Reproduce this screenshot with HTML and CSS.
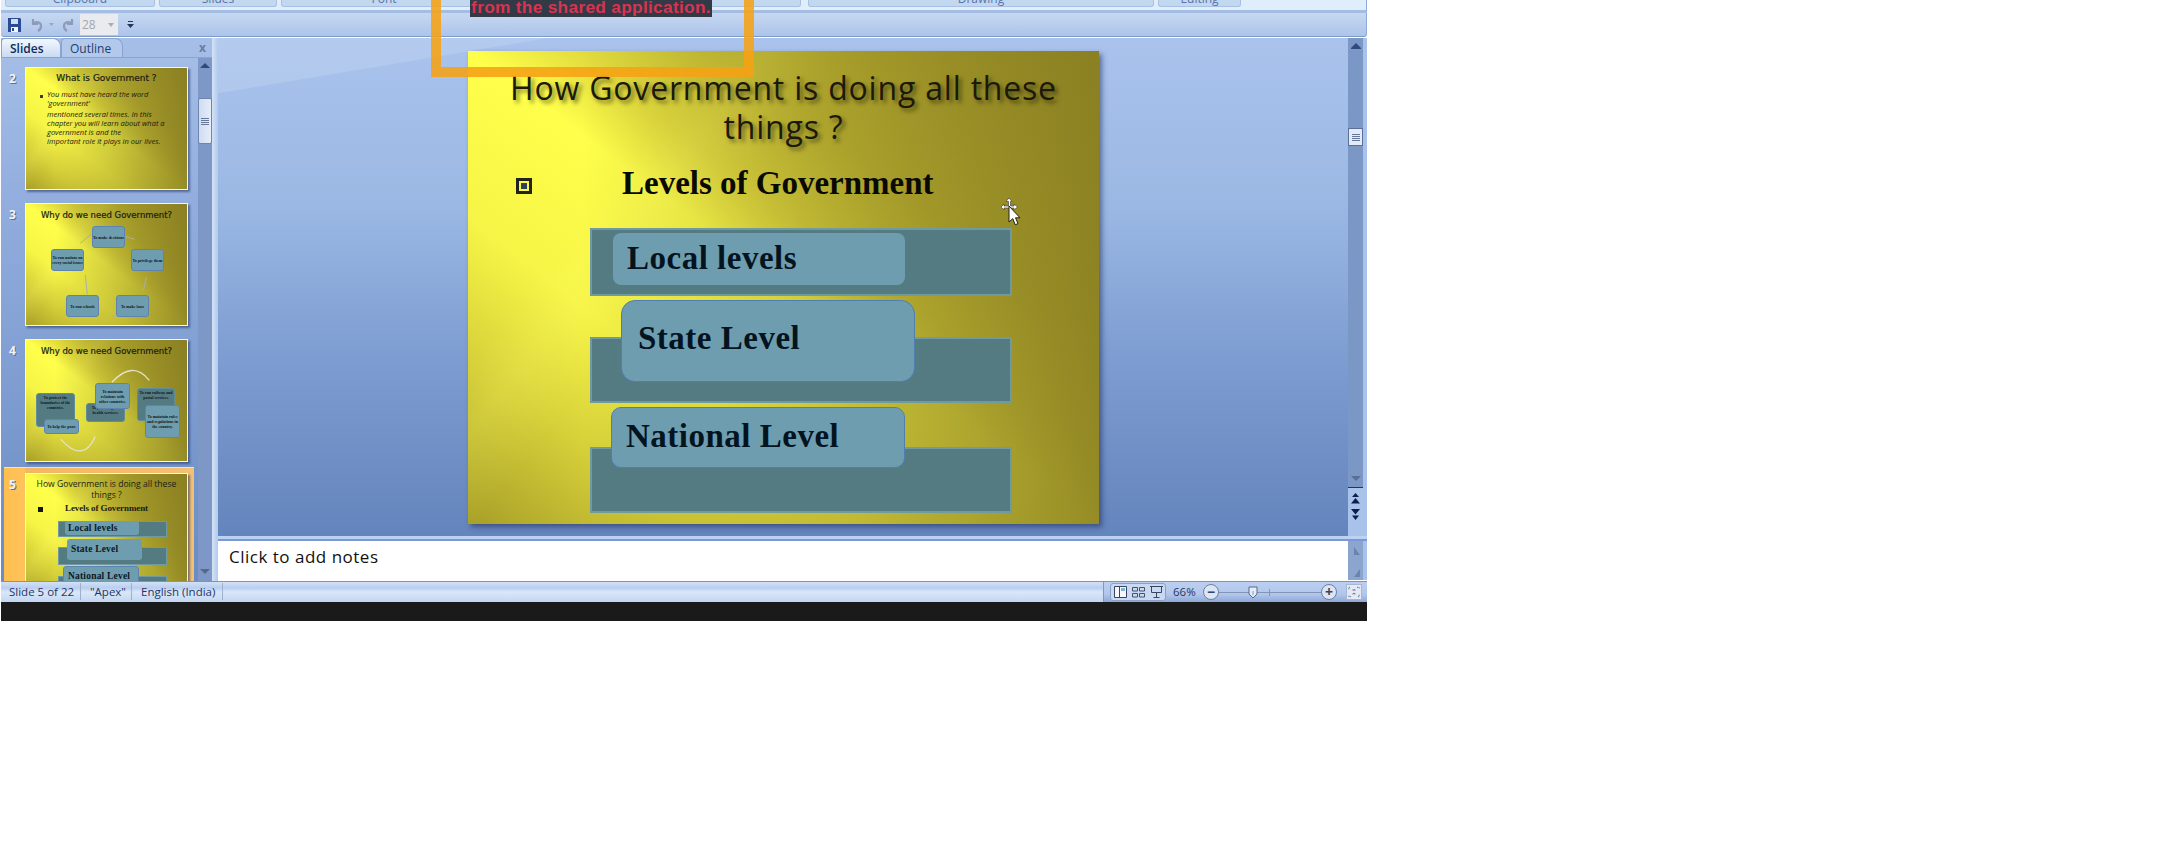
FILE: index.html
```html
<!DOCTYPE html>
<html lang="en">
<head>
    <meta charset="UTF-8" />
    <title>Presentation - Slide 5</title>
    <link rel="stylesheet" href="styles.css">
</head>
<body>
    <div class="app">
        <div class="ribbon">
            <div class="group group-clipboard">Clipboard</div>
            <div class="group group-slides">Slides</div>
            <div class="group group-font">Font</div>
            <div class="group group-para"></div>
            <div class="group group-drawing">Drawing</div>
            <div class="group group-editing">Editing</div>
        </div>
        <div class="qat">
            <svg class="qat-icon" width="13" height="14" viewBox="0 0 13 14"><path d="M0 0h12l1 1v13H0z" fill="#2a4a92"/><path d="M3 1h7v5H3z" fill="#cfdcf2"/><path d="M3 9h7v5H3z" fill="#f2f5fb"/><path d="M4 10h2v3H4z" fill="#2a4a92"/></svg>
            <svg class="qat-icon undo" width="13" height="14" viewBox="0 0 13 14"><path d="M3 1v5h5M3.500 5.500C6 3 11 4 11 8c0 2-1 4-3 5" fill="none" stroke="#8c9bb8" stroke-width="2.200"/></svg>
            <svg class="qat-icon small-arrow" width="5" height="3" viewBox="0 0 5 3"><path d="M0 0h5L2.500 3z" fill="#97a6c2"/></svg>
            <svg class="qat-icon redo" width="13" height="14" viewBox="0 0 13 14"><path d="M10 1v5H5M9.500 5.500C7 3 2 4 2 8c0 2 1 4 3 5" fill="none" stroke="#8c9bb8" stroke-width="2.200"/></svg>
            <div class="combo"><span>28</span><svg width="6" height="4" viewBox="0 0 6 4"><path d="M0 0h6L3 4z" fill="#a8acb4"/></svg></div>
            <svg class="qat-icon customise" width="7" height="7" viewBox="0 0 7 7"><path d="M1 0h5v1H1zM0 3h7L3.500 7z" fill="#24365e"/></svg>
        </div>
        <div class="workspace">
            <aside class="sidebar">
                <div class="tabs">
                    <div class="tab tab-active">Slides</div>
                    <div class="tab">Outline</div>
                    <span class="tab-close">x</span>
                </div>
                <div class="thumbs-row">
                    <div class="thumbs">
                        <div class="thumb-row">
                            <span class="thumb-num">2</span>
                            <div class="slide-bg thumb">
                                <div class="t2-title">What is Government ?</div>
                                <span class="t2-bullet"></span>
                                <div class="t2-body">
                                    <p>You must have heard the word</p>
                                    <p class="t2-gap">'government'</p>
                                    <p>mentioned several times. In this</p>
                                    <p>chapter you will learn about what a</p>
                                    <p>government is and the</p>
                                    <p>important role it plays in our lives.</p>
                                </div>
                            </div>
                        </div>
                        <div class="thumb-row">
                            <span class="thumb-num">3</span>
                            <div class="slide-bg thumb">
                                <div class="t-title">Why do we need Government?</div>
                                <svg class="t-arcs" viewBox="0 0 163 123"><path d="M55 40Q62 33 68 30M101 33l9 3M122 74l-3 14M99 114H88M62 92L60 72" fill="none" stroke="#a9aeb0" stroke-width="1"/></svg>
                                <div class="node light n31">To make decisions</div>
                                <div class="node light n32">To privilege them</div>
                                <div class="node light n33">To run nations on every social issues</div>
                                <div class="node light n34">To run schools</div>
                                <div class="node light n35">To make laws</div>
                            </div>
                        </div>
                        <div class="thumb-row">
                            <span class="thumb-num">4</span>
                            <div class="slide-bg thumb">
                                <div class="t-title">Why do we need Government?</div>
                                <svg class="t-arcs" viewBox="0 0 163 123"><path d="M87 43Q108 20 125 41M35 101Q58 126 70 98" fill="none" stroke="#e5e2cc" stroke-width="1.300"/></svg>
                                <div class="node dark n41">To protect the boundaries of the countries.</div>
                                <div class="node light n42">To help the poor.</div>
                                <div class="node dark n43">To provide good health services.</div>
                                <div class="node light n44">To maintain relations with other countries.</div>
                                <div class="node dark n45">To run railway and postal services.</div>
                                <div class="node light n46">To maintain rules and regulations in the country.</div>
                            </div>
                        </div>
                        <div class="thumb-row thumb-selected">
                            <span class="thumb-num">5</span>
                            <div class="slide-bg thumb">
                                <div class="t5-title">How Government  is doing all these<br>things ?</div>
                                <span class="t5-bullet"></span>
                                <div class="t5-head">Levels of Government</div>
                                <div class="t5-bar t5-bar1"></div>
                                <div class="t5-box t5-box1">Local levels</div>
                                <div class="t5-bar t5-bar2"></div>
                                <div class="t5-box t5-box2">State Level</div>
                                <div class="t5-bar t5-bar3"></div>
                                <div class="t5-box t5-box3">National Level</div>
                            </div>
                        </div>
                    </div>
                    <div class="side-scroll">
                        <svg width="10" height="5" viewBox="0 0 10 5"><path d="M5 0l5 5H0z" fill="#2f4a7c"/></svg>
                        <div class="side-thumb"><i></i><i></i><i></i><i></i></div>
                        <svg class="side-down" width="10" height="5" viewBox="0 0 10 5"><path d="M0 0h10L5 5z" fill="#56688c"/></svg>
                    </div>
                </div>
            </aside>
            <div class="splitter"></div>
            <main class="main">
                <div class="editor-row">
                    <div class="editor">
                        <div class="slide-bg slide">
                            <h1 class="slide-title">How Government is doing all these<br>things ?</h1>
                            <span class="slide-bullet"><i></i></span>
                            <div class="slide-head">Levels of Government</div>
                            <div class="bar bar1"></div>
                            <div class="box box1">Local levels</div>
                            <div class="bar bar2"></div>
                            <div class="box box2">State Level</div>
                            <div class="bar bar3"></div>
                            <div class="box box3">National Level</div>
                            <svg class="cursor" width="20" height="29" viewBox="0 0 20 29">
                                <path d="M8 0l3 3.500H9.500V8H13V6l3.500 3L13 12v-2H3v2L0 9l3-3v2h4.500V3.500H5z" fill="#fff" stroke="#333" stroke-width=".6"/>
                                <path d="M8 8v16l3.800-3.400 2.400 6.200 2.800-1.200-2.500-5.800H19z" fill="#fff" stroke="#222" stroke-width="1"/>
                            </svg>
                        </div>
                    </div>
                    <div class="v-scroll">
                        <div class="v-track">
                            <svg class="v-up" width="10" height="6" viewBox="0 0 10 6"><path d="M5 0l5 5v1H0V5z" fill="#2e4a7e"/></svg>
                            <div class="v-thumb"><i></i><i></i><i></i><i></i></div>
                            <svg class="v-down" width="10" height="5" viewBox="0 0 10 5"><path d="M0 0h10L5 5z" fill="#5a6f98"/></svg>
                        </div>
                        <div class="v-nav">
                            <svg width="9" height="11" viewBox="0 0 9 11"><path d="M4.500 0L8 4H1zM4.500 5L9 10.500H0z" fill="#0c1f4d"/></svg>
                            <svg width="9" height="11" viewBox="0 0 9 11"><path d="M0 0h9L4.500 5.500zM1 6.500h7L4.500 11z" fill="#0c1f4d"/></svg>
                        </div>
                    </div>
                </div>
                <div class="h-split"></div>
                <div class="notes-row">
                    <div class="notes">Click to add notes</div>
                    <div class="notes-scroll">
                        <svg width="6" height="8" viewBox="0 0 6 8"><path d="M0 0l6 8H0z" fill="#6c83ad"/></svg>
                        <svg width="6" height="8" viewBox="0 0 6 8"><path d="M6 0v8H0z" fill="#6c83ad"/></svg>
                    </div>
                </div>
            </main>
        </div>
        <footer class="status">
            <div class="status-item status-slide">Slide 5 of 22</div>
            <div class="status-item status-theme">"Apex"</div>
            <div class="status-item status-lang">English (India)</div>
            <div class="status-fill"></div>
            <div class="status-right">
                <div class="views">
                    <svg width="15" height="14" viewBox="0 0 15 14"><path d="M1.500 1.500h12v11h-12zM6.500 1.500v11" fill="#f4f7fc" stroke="#39455e"/><path d="M8 3h4v3H8z" fill="#7fb2d8"/></svg>
                    <svg width="15" height="14" viewBox="0 0 15 14"><path d="M1.500 2.500h5v3.500h-5zM8.500 2.500h5v3.500h-5zM1.500 8.500h5V12h-5zM8.500 8.500h5V12h-5z" fill="none" stroke="#46526c"/></svg>
                    <svg width="15" height="14" viewBox="0 0 15 14"><path d="M1 1.500h13M2.500 2v5.500h10V2" fill="none" stroke="#39455e"/><path d="M7.500 8v4M4.500 12.500h6" stroke="#39455e" fill="none"/></svg>
                </div>
                <span class="zoom-text">66%</span>
                <div class="zoom-btn">&minus;</div>
                <div class="zoom-slider">
                    <span class="zoom-tick"></span>
                    <svg class="zoom-handle" width="10" height="13" viewBox="0 0 10 13"><path d="M1 1h8v7l-4 4-4-4z" fill="#e4ecf8" stroke="#54688f"/><path d="M5 5v4" stroke="#8a9abb"/></svg>
                </div>
                <div class="zoom-btn">+</div>
                <div class="fit-btn">
                    <svg width="15" height="14" viewBox="0 0 15 14"><path d="M2 4V2h2M11 2h2v2M13 10v2h-2M4 12H2v-2M7.500 4v2M6 5h3M7.500 8v2M6 9h3" fill="none" stroke="#33415f" stroke-dasharray="1 1"/></svg>
                </div>
            </div>
        </footer>
        <div class="black-strip"></div>
        <div class="highlight-frame"></div>
        <div class="caption">from the shared application.</div>
    </div>
</body>
</html>
```
FILE: styles.css
```css
body {
    margin: 0;
    background-color: #ffffff;
    font-family: "Open Sans", sans-serif;
}
.app {
    position: relative;
    width: 1366px;
    height: 621px;
    margin-left: 1px;
    overflow: hidden;
}
/* ribbon (only the bottom edge is on screen) */
.ribbon {
    height: 10px;
    display: flex;
    align-items: flex-start;
    gap: 4px;
    padding-left: 4px;
    background: #e0eefb;
    border-bottom: 3px solid #a4bde2;
    border-right: 1px solid #8fa9d2;
    box-sizing: content-box;
}
.group {
    height: 7px;
    display: flex;
    justify-content: center;
    align-items: flex-end;
    overflow: hidden;
    line-height: 14px;
    font-size: 12px;
    color: #5a74a8;
    background: #c2d8f1;
    border: 1px solid #a9c0e0;
    border-top: none;
    border-radius: 0 0 3px 3px;
    box-sizing: border-box;
}
.group-clipboard { width: 150px; }
.group-slides { width: 118px; }
.group-font { width: 206px; }
.group-para { width: 310px; }
.group-drawing { width: 346px; margin-left: 3px; }
.group-editing { width: 83px; }
.qat {
    height: 24px;
    display: flex;
    align-items: center;
    background: linear-gradient(#c6d8f1, #adc4ea);
    border-bottom: 1px solid #7e9ac8;
    border-right: 1px solid #8fa9d2;
    border-radius: 0 0 3px 3px;
    box-sizing: border-box;
    padding-left: 7px;
}
.qat-icon { flex: none; }
.undo { margin-left: 9px; }
.small-arrow { margin-left: 6px; }
.redo { margin-left: 8px; }
.combo {
    width: 38px;
    height: 21px;
    margin-left: 5px;
    display: flex;
    align-items: center;
    justify-content: space-between;
    padding: 0 4px 0 2px;
    box-sizing: border-box;
    background: #e9ebef;
    font-size: 12px;
    color: #a3a7ae;
}
.customise { margin-left: 9px; }
.workspace {
    height: 543px;
    display: flex;
    margin-top: 1px;
}
.sidebar {
    width: 211px;
    display: flex;
    flex-direction: column;
    background: linear-gradient(#a6bfe8, #8fabdc 35%, #6a8bc3);
}
.tabs {
    height: 20px;
    flex: none;
    display: flex;
    align-items: center;
    position: relative;
    border-bottom: 1px solid #8aa4cf;
    box-sizing: border-box;
    font-size: 12px;
    color: #1f3f6e;
}
.tab {
    height: 19px;
    padding: 0 15px 0 8px;
    line-height: 19px;
    border-radius: 4px 8px 0 0;
    border: 1px solid #8aa4cf;
    border-bottom: none;
    box-sizing: border-box;
}
.tab-active {
    width: 60px;
    background: linear-gradient(#f2f7fe, #c9dbf3);
    font-weight: 600;
    color: #0c2b5c;
}
.tab + .tab {
    width: 62px;
    background: #b3c9ec;
}
.tab-close {
    margin-left: auto;
    margin-right: 6px;
    font-weight: 700;
    font-size: 12px;
    color: #6a7d9e;
}
.thumbs-row {
    flex: 1;
    display: flex;
    min-height: 0;
}
.thumbs {
    flex: 1;
    padding: 9px 0 0 3px;
    overflow: hidden;
}
.thumb-row {
    display: flex;
    width: 190px;
    margin-bottom: 13px;
    padding-left: 21px;
    box-sizing: border-box;
    position: relative;
}
.thumb-selected {
    margin-top: -8px;
    padding-top: 5px;
    padding-bottom: 5px;
    height: 140px;
    background: linear-gradient(90deg, #ffbf4f 0, #ffc35c 21px, #f3b765 21px, #f3c074);
    border-top: 1px solid #f3e3b5;
}
.thumb-num {
    position: absolute;
    left: 5px;
    top: 3px;
    font-size: 12px;
    font-weight: 700;
    color: #eef3fb;
    text-shadow: 1px 1px 0 #5f6f8f;
}
.thumb-selected .thumb-num { top: 8px; }
/* the theme background, used by the big slide and all thumbnails */
.slide-bg {
    position: relative;
    flex: none;
    background:
        linear-gradient(90deg, transparent 18%, rgba(135, 124, 33, .35) 50%, rgba(135, 124, 33, .6) 72%, rgba(135, 124, 33, .88) 100%),
        linear-gradient(128deg, transparent 24%, rgba(255, 255, 110, .15) 30%, transparent 38%),
        linear-gradient(37deg, #a89f28 0, #d8d23a 18%, #f6f446 32%, #ffff4b 50%, #e4de3f 58%, #c9c135 70%, #aca22a 100%);
}
.thumb {
    width: 163px;
    height: 123px;
    border: 1px solid #f6f6ea;
    box-sizing: border-box;
    box-shadow: 2px 2px 2px rgba(40, 60, 110, .6);
    color: #1c1c10;
}
.t-title,
.t2-title {
    position: absolute;
    left: 0;
    right: 0;
    top: 6px;
    text-align: center;
    font-family: "DejaVu Sans", sans-serif;
    font-size: 8.500px;
    -webkit-text-stroke: .2px #1c1c10;
    white-space: nowrap;
}
.t2-title { top: 5px; font-size: 9px; }
.t2-bullet {
    position: absolute;
    left: 14px;
    top: 27px;
    width: 3px;
    height: 3px;
    background: #3c3c20;
}
.t2-body {
    position: absolute;
    left: 21px;
    top: 22px;
    font-size: 7.500px;
    line-height: 9px;
    font-style: italic;
    white-space: nowrap;
}
.t2-body p { margin: 0; }
.t2-gap { margin-bottom: 2px !important; }
.t-arcs {
    position: absolute;
    left: 0;
    top: 0;
    width: 100%;
    height: 100%;
}
.node {
    position: absolute;
    display: flex;
    align-items: center;
    justify-content: center;
    text-align: center;
    font-family: "Liberation Serif", serif;
    font-size: 4px;
    line-height: 5px;
    font-weight: 700;
    color: #0c1820;
    border-radius: 3px;
    box-sizing: border-box;
}
.node.light { background: #6f9db0; border: 1px solid #5f83b0; }
.node.dark { background: #557b82; border: 1px solid #5f8d98; align-items: flex-start; padding: 1px; }
.n31 { left: 66px; top: 22px; width: 33px; height: 22px; }
.n32 { left: 105px; top: 45px; width: 33px; height: 22px; }
.n33 { left: 25px; top: 45px; width: 33px; height: 22px; }
.n34 { left: 40px; top: 91px; width: 33px; height: 22px; }
.n35 { left: 90px; top: 91px; width: 33px; height: 22px; }
.n41 { left: 10px; top: 53px; width: 39px; height: 34px; }
.n42 { left: 18px; top: 79px; width: 35px; height: 15px; }
.n43 { left: 60px; top: 63px; width: 39px; height: 19px; }
.n44 { left: 69px; top: 43px; width: 35px; height: 26px; }
.n45 { left: 111px; top: 48px; width: 38px; height: 33px; }
.n46 { left: 119px; top: 65px; width: 35px; height: 33px; }
.t5-title {
    position: absolute;
    left: 0;
    right: 0;
    top: 5px;
    text-align: center;
    font-size: 8.600px;
    line-height: 11px;
    white-space: pre-line;
}
.t5-bullet {
    position: absolute;
    left: 12px;
    top: 33px;
    width: 5px;
    height: 5px;
    background: #15150a;
}
.t5-head {
    position: absolute;
    left: 39px;
    top: 29px;
    font-family: "Liberation Serif", serif;
    font-size: 9px;
    font-weight: 700;
    letter-spacing: -.1px;
    white-space: nowrap;
}
.t5-bar {
    position: absolute;
    left: 32px;
    width: 109px;
    height: 16px;
    background: #557b82;
    border: 1px solid #6f9aa0;
    box-sizing: border-box;
}
.t5-box {
    position: absolute;
    font-family: "Liberation Serif", serif;
    font-size: 9.500px;
    font-weight: 700;
    letter-spacing: .2px;
    color: #0c1820;
    background: #6f9db0;
    border-radius: 3px;
    padding-left: 3px;
    box-sizing: border-box;
    white-space: nowrap;
}
.t5-bar1 { top: 47px; }
.t5-box1 { left: 39px; top: 47px; width: 74px; height: 14px; padding-top: 2px; }
.t5-bar2 { top: 73px; height: 18px; }
.t5-box2 { left: 41px; top: 65px; width: 75px; height: 21px; padding: 5px 0 0 4px; }
.t5-bar3 { top: 102px; height: 18px; }
.t5-box3 { left: 37px; top: 92px; width: 76px; height: 18px; padding: 4px 0 0 4px; border: 1px solid #5f83b0; }
.side-scroll {
    width: 14px;
    flex: none;
    margin-right: 0;
    display: flex;
    flex-direction: column;
    align-items: center;
    padding-top: 5px;
    box-sizing: border-box;
    background: #7d98c6;
}
.side-thumb {
    width: 14px;
    height: 46px;
    margin-top: 30px;
    display: flex;
    flex-direction: column;
    align-items: center;
    justify-content: center;
    gap: 1px;
    background: linear-gradient(90deg, #cfdcf0, #e6edf8);
    border: 1px solid #6f85ad;
    border-radius: 2px;
    box-sizing: border-box;
}
.side-thumb i,
.v-thumb i {
    display: block;
    width: 8px;
    height: 1px;
    background: #67779a;
}
.side-down { margin-top: auto; margin-bottom: 7px; }
.splitter {
    width: 6px;
    flex: none;
    background: linear-gradient(90deg, #d4e2f6, #b2caee);
}
.main {
    flex: 1;
    display: flex;
    flex-direction: column;
    min-width: 0;
}
.editor-row {
    height: 498px;
    display: flex;
}
.editor {
    flex: 1;
    display: flex;
    align-items: center;
    justify-content: center;
    background:
        linear-gradient(170.500deg, rgba(200, 216, 243, .35) 54px, transparent 55px),
        linear-gradient(#a9c3ec, #9ab7e3 35%, #7f9ed2 62%, #6484bd);
}
.slide {
    width: 631px;
    height: 473px;
    margin-left: 1px;
    box-shadow: 3px 3px 5px rgba(30, 40, 90, .55);
}
.slide-title {
    position: absolute;
    left: 0;
    right: 0;
    top: 17px;
    margin: 0;
    text-align: center;
    font-size: 32px;
    font-weight: 400;
    line-height: 39px;
    letter-spacing: .8px;
    color: #1b1a08;
    text-shadow: 3px 3px 4px rgba(0, 0, 0, .5);
}
.slide-bullet {
    position: absolute;
    left: 48px;
    top: 127px;
    width: 16px;
    height: 16px;
    border: 3px solid #20251c;
    box-sizing: border-box;
    display: flex;
    align-items: center;
    justify-content: center;
}
.slide-bullet i {
    display: block;
    width: 6px;
    height: 6px;
    background: #2f4058;
}
.slide-head {
    position: absolute;
    left: 154px;
    top: 113px;
    font-family: "Liberation Serif", serif;
    font-size: 33px;
    font-weight: 700;
    line-height: 38px;
    color: #0a0a04;
    white-space: nowrap;
}
.bar {
    position: absolute;
    left: 122px;
    width: 422px;
    background: #557b82;
    border: 2px solid #6f9aa0;
    box-sizing: border-box;
}
.bar1 { top: 177px; height: 68px; }
.bar2 { top: 286px; height: 66px; }
.bar3 { top: 396px; height: 66px; }
.box {
    position: absolute;
    font-family: "Liberation Serif", serif;
    font-size: 33px;
    font-weight: 700;
    line-height: 38px;
    letter-spacing: .5px;
    color: #04141f;
    background: #6f9db0;
    border-radius: 10px;
    box-sizing: border-box;
    white-space: nowrap;
}
.box1 { left: 145px; top: 182px; width: 292px; height: 52px; padding: 6px 0 0 14px; border-radius: 8px; }
.box2 { left: 153px; top: 249px; width: 294px; height: 82px; padding: 18px 0 0 16px; border: 1px solid #4f7eb0; border-radius: 14px; }
.box3 { left: 143px; top: 356px; width: 294px; height: 61px; padding: 9px 0 0 14px; border: 1px solid #4f7eb0; }
.cursor {
    position: absolute;
    left: 533px;
    top: 147px;
}
.v-scroll {
    width: 19px;
    flex: none;
    display: flex;
    flex-direction: column;
    background: #a8c2ea;
}
.v-track {
    position: relative;
    height: 450px;
    width: 15px;
    display: flex;
    flex-direction: column;
    align-items: center;
    background: #7b97c6;
    border-bottom: 1px solid #22355e;
    box-sizing: border-box;
    padding-top: 5px;
}
.v-thumb {
    width: 15px;
    height: 18px;
    margin-top: 79px;
    display: flex;
    flex-direction: column;
    align-items: center;
    justify-content: center;
    gap: 1px;
    background: #e4ebf6;
    border: 1px solid #59709c;
    box-sizing: border-box;
}
.v-down { margin-top: auto; margin-bottom: 6px; }
.v-nav {
    width: 15px;
    display: flex;
    flex-direction: column;
    align-items: center;
    gap: 5px;
    padding-top: 5px;
}
.h-split {
    height: 5px;
    background: linear-gradient(#bcd2f3, #bcd2f3 3px, #7d96d8 3px, #7d96d8);
}
.notes-row {
    height: 39px;
    display: flex;
    background: #a8c2ea;
}
.notes {
    flex: 1;
    padding: 5px 0 0 11px;
    background: #ffffff;
    font-size: 17px;
    line-height: 22px;
    color: #111111;
    letter-spacing: .5px;
}
.notes-scroll {
    width: 15px;
    margin-right: 4px;
    flex: none;
    display: flex;
    flex-direction: column;
    justify-content: space-between;
    align-items: center;
    padding: 6px 0 3px 3px;
    box-sizing: border-box;
    background: #8ba5cf;
}
.status {
    height: 21px;
    display: flex;
    align-items: stretch;
    background: linear-gradient(#d2e1f6, #b9cef0 30%, #dae7f8 50%, #c2d6f3);
    border-top: 1px solid #7f93b5;
    box-sizing: border-box;
    font-size: 11.500px;
    line-height: 20px;
    color: #1d3668;
}
.status-item {
    padding-left: 8px;
    border-right: 1px solid #9fb0cc;
    margin: 1px 0 2px;
    line-height: 17px;
    box-sizing: border-box;
    white-space: nowrap;
}
.status-slide { width: 80px; }
.status-theme { width: 51px; padding-left: 9px; }
.status-lang { width: 91px; padding-left: 9px; }
.status-fill { flex: 1; }
.status-right {
    width: 264px;
    display: flex;
    align-items: center;
    padding-left: 6px;
    box-sizing: border-box;
    background: linear-gradient(#bccff0, #b2c7ec 60%, #8fa8d8);
    border-left: 1px solid #8298c0;
}
.views {
    width: 56px;
    height: 18px;
    display: flex;
    align-items: center;
    justify-content: space-around;
    background: #c9d9f1;
    border: 1px solid #8aa0c7;
    border-radius: 3px;
    box-sizing: border-box;
}
.zoom-text {
    margin-left: 7px;
    width: 30px;
    font-size: 11.500px;
}
.zoom-btn {
    width: 16px;
    height: 16px;
    flex: none;
    display: flex;
    align-items: center;
    justify-content: center;
    border: 1px solid #6f7f9e;
    border-radius: 50%;
    box-sizing: border-box;
    background: #dbe5f5;
    font-size: 14px;
    font-weight: 700;
    line-height: 14px;
    color: #37435f;
}
.zoom-slider {
    position: relative;
    width: 102px;
    height: 1px;
    background: #8295b8;
}
.zoom-tick {
    position: absolute;
    left: 50px;
    top: -3px;
    width: 1px;
    height: 7px;
    background: #8295b8;
}
.zoom-handle {
    position: absolute;
    left: 29px;
    top: -6px;
}
.fit-btn {
    width: 16px;
    height: 16px;
    margin-left: 9px;
    flex: none;
    display: flex;
    align-items: center;
    justify-content: center;
    background: #e3eaf5;
    border: 1px solid #a7b6d1;
    box-sizing: border-box;
}
.black-strip {
    height: 21px;
    background: #1a1a1a;
}
/* recording overlay from the screencast */
.highlight-frame {
    position: absolute;
    left: 430px;
    top: -10px;
    width: 323px;
    height: 87px;
    border: 10px solid rgba(246, 162, 20, .88);
    box-sizing: border-box;
}
.caption {
    position: absolute;
    left: 469px;
    top: -6px;
    width: 242px;
    height: 23px;
    background: #333a47;
    font-family: "Liberation Sans", sans-serif;
    font-size: 17.300px;
    font-weight: 700;
    line-height: 27px;
    text-align: center;
    letter-spacing: .3px;
    color: #d93350;
    white-space: nowrap;
}
```
